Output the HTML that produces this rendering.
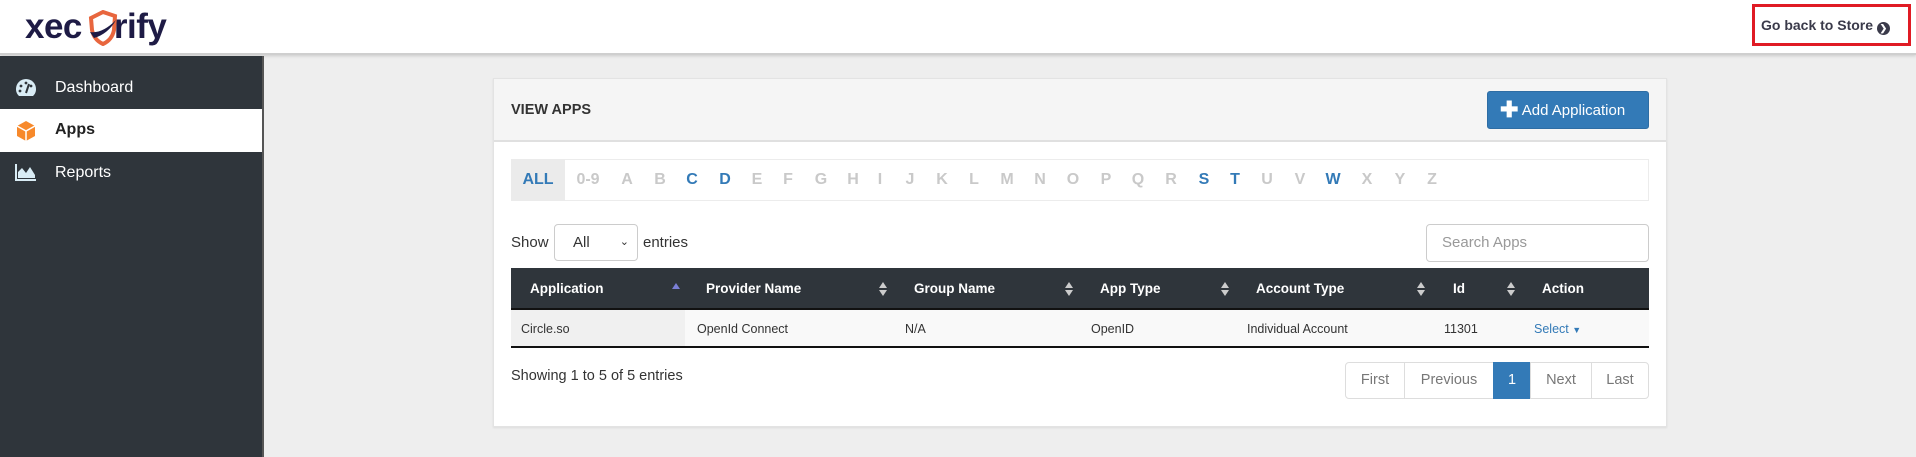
<!DOCTYPE html>
<html><head><meta charset="utf-8"><style>
*{box-sizing:border-box;margin:0;padding:0}
body{width:1916px;height:457px;overflow:hidden;background:#eeeeee;font-family:"Liberation Sans",Arial,sans-serif;position:relative;color:#333}
.a{position:absolute}
#hdr{left:0;top:0;width:1916px;height:55px;background:#fff;border-bottom:2px solid #cfcfcf;box-shadow:0 1px 3px rgba(0,0,0,.15)}
#side{left:0;top:56px;width:264px;height:401px;background:#2f353b;border-right:2px solid #555}
.nav{position:absolute;left:0;width:262px;height:42px;color:#fff;font-size:16px;line-height:42px;padding-left:55px}
.nav svg{position:absolute;left:15px;top:11px}
#panel{left:493px;top:78px;width:1174px;height:349px;background:#fff;border:1px solid #e3e3e3;box-shadow:0 1px 2px rgba(0,0,0,.08)}
.th{position:absolute;top:0;color:#fff;font-weight:bold;font-size:13.5px;line-height:42px}
.td{position:absolute;top:0;font-size:12.5px;line-height:38px;color:#333}
.lt{position:absolute;top:159px;width:30px;text-align:center;font-weight:bold;font-size:16px;line-height:42px;color:#c9c9c9}
.b{color:#337ab7}
.sort{position:absolute;top:13px;width:8px;height:16px}
.pg{position:absolute;top:362px;height:37px;border:1px solid #ddd;font-size:14.5px;line-height:35px;text-align:center;color:#777;background:#fff}
</style></head><body>
<div id="hdr" class="a">
  <div class="a" style="left:25px;top:5px;font-size:35px;font-weight:bold;color:#1e1b45;letter-spacing:-0.5px;line-height:44px">xec<span style="display:inline-block;width:32px"></span>rify</div>
  <svg class="a" style="left:88px;top:10px" width="30" height="36" viewBox="0 0 30 36"><path d="M15 2 L27 6 L26 20 Q24 30 15 34 Q6 30 4 20 L3 8 Z" fill="none" stroke="#e8663e" stroke-width="4"/><path d="M2 22 Q14 24 28 10 Q20 24 6 28 Z" fill="#1e1b45"/></svg>
  <div class="a" style="left:1752px;top:4px;width:159px;height:42px;border:3px solid #e01b24;font-size:14px;font-weight:bold;color:#3a3a4a;line-height:36px;padding-left:6px;white-space:nowrap">Go back to Store <span style="display:inline-block;width:13px;height:13px;border-radius:50%;background:#3a3a4a;color:#fff;font-size:9px;line-height:13px;text-align:center;vertical-align:-1px">&#10095;</span></div>
</div>
<div id="side" class="a">
  <div class="nav" style="top:11px;height:42px">
    <svg width="22" height="20" viewBox="0 0 22 20"><path d="M11 1a10 10 0 0 0-10 10c0 3 1 5 3 7h14c2-2 3-4 3-7A10 10 0 0 0 11 1z" fill="#d9ecf5"/><circle cx="6" cy="8" r="1.4" fill="#2f353b"/><circle cx="11" cy="5" r="1.4" fill="#2f353b"/><circle cx="16" cy="8" r="1.4" fill="#2f353b"/><circle cx="5" cy="13" r="1.4" fill="#2f353b"/><path d="M11 15 L14 6" stroke="#2f353b" stroke-width="2"/></svg>Dashboard</div>
  <div class="nav" style="top:53px;height:43px;background:#fff;color:#222;font-weight:bold">
    <svg width="22" height="22" viewBox="0 0 22 22"><path d="M11 1 L20 6 L20 16 L11 21 L2 16 L2 6 Z" fill="#f7892b"/><path d="M2 6 L11 11 L20 6 M11 11 L11 21" stroke="#fff" stroke-width="1.5" fill="none"/></svg>Apps</div>
  <div class="nav" style="top:96px;height:42px">
    <svg width="22" height="18" viewBox="0 0 22 18"><path d="M1 1 V17 H21" stroke="#d9ecf5" stroke-width="2" fill="none"/><path d="M3 15 L3 9 L7 5 L11 10 L15 4 L20 12 L20 15 Z" fill="#d9ecf5"/></svg>Reports</div>
</div>
<div id="panel" class="a">
  <div class="a" style="left:0;top:0;width:1172px;height:63px;background:#f5f5f5;border-bottom:2px solid #e0e0e0"></div>
  <div class="a" style="left:17px;top:0;line-height:63px;font-size:14.5px;font-weight:bold;color:#333">VIEW APPS</div>
  <div class="a" style="left:993px;top:12px;width:162px;height:38px;background:#337ab7;border:1px solid #2e6da4;border-radius:3px;color:#fff;font-size:15px;line-height:36px;padding-left:12px;white-space:nowrap"><span style="font-weight:bold;font-size:22px;vertical-align:-2px">&#10010;</span> Add Application</div>
</div>
<div class="a" style="left:511px;top:159px;width:1138px;height:42px;border:1px solid #ececec;background:#fff"></div>
<div class="a" style="left:511px;top:159px;width:54px;height:42px;background:#ebebeb"></div>
<div class="lt b" style="left:522px;width:32px">ALL</div>
<div class="lt" style="left:573px">0-9</div>
<div class="lt" style="left:612px">A</div><div class="lt" style="left:645px">B</div><div class="lt b" style="left:677px">C</div><div class="lt b" style="left:710px">D</div><div class="lt" style="left:742px">E</div><div class="lt" style="left:773px">F</div><div class="lt" style="left:806px">G</div><div class="lt" style="left:838px">H</div><div class="lt" style="left:865px">I</div><div class="lt" style="left:895px">J</div><div class="lt" style="left:927px">K</div><div class="lt" style="left:959px">L</div><div class="lt" style="left:992px">M</div><div class="lt" style="left:1025px">N</div><div class="lt" style="left:1058px">O</div><div class="lt" style="left:1091px">P</div><div class="lt" style="left:1123px">Q</div><div class="lt" style="left:1156px">R</div><div class="lt b" style="left:1189px">S</div><div class="lt b" style="left:1220px">T</div><div class="lt" style="left:1252px">U</div><div class="lt" style="left:1285px">V</div><div class="lt b" style="left:1318px">W</div><div class="lt" style="left:1352px">X</div><div class="lt" style="left:1385px">Y</div><div class="lt" style="left:1417px">Z</div>

<div class="a" style="left:511px;top:224px;line-height:37px;font-size:15px;color:#333">Show</div>
<div class="a" style="left:554px;top:224px;width:84px;height:37px;border:1px solid #ccc;border-radius:4px;background:#fff;font-size:15px;line-height:35px;padding-left:18px">All<span style="position:absolute;right:8px;top:0;font-size:11px">&#8964;</span></div>
<div class="a" style="left:643px;top:224px;line-height:37px;font-size:15px;color:#333">entries</div>
<div class="a" style="left:1426px;top:224px;width:223px;height:38px;border:1px solid #ccc;border-radius:4px;background:#fff;font-size:15px;line-height:36px;padding-left:15px;color:#999">Search Apps</div>

<div class="a" style="left:511px;top:268px;width:1138px;height:42px;background:#2f353b;border-bottom:2px solid #111">
  <div class="th" style="left:19px">Application</div>
  <div class="th" style="left:195px">Provider Name</div>
  <div class="th" style="left:403px">Group Name</div>
  <div class="th" style="left:589px">App Type</div>
  <div class="th" style="left:745px">Account Type</div>
  <div class="th" style="left:942px">Id</div>
  <div class="th" style="left:1031px">Action</div>
  <svg class="sort" style="left:161px" viewBox="0 0 8 16"><path d="M0 8 L4 2 L8 8 Z" fill="#7b7fd6"/></svg>
  <svg class="sort" style="left:368px" viewBox="0 0 8 16"><path d="M0 7 L4 1 L8 7 Z M0 9 L4 15 L8 9 Z" fill="#ccc"/></svg>
  <svg class="sort" style="left:554px" viewBox="0 0 8 16"><path d="M0 7 L4 1 L8 7 Z M0 9 L4 15 L8 9 Z" fill="#ccc"/></svg>
  <svg class="sort" style="left:710px" viewBox="0 0 8 16"><path d="M0 7 L4 1 L8 7 Z M0 9 L4 15 L8 9 Z" fill="#ccc"/></svg>
  <svg class="sort" style="left:906px" viewBox="0 0 8 16"><path d="M0 7 L4 1 L8 7 Z M0 9 L4 15 L8 9 Z" fill="#ccc"/></svg>
  <svg class="sort" style="left:996px" viewBox="0 0 8 16"><path d="M0 7 L4 1 L8 7 Z M0 9 L4 15 L8 9 Z" fill="#ccc"/></svg>
</div>
<div class="a" style="left:511px;top:310px;width:1138px;height:38px;background:#f9f9f9;border-bottom:2px solid #111">
  <div class="a" style="left:0;top:0;width:174px;height:36px;background:#f0f0f0"></div>
  <div class="td" style="left:10px">Circle.so</div>
  <div class="td" style="left:186px">OpenId Connect</div>
  <div class="td" style="left:394px">N/A</div>
  <div class="td" style="left:580px">OpenID</div>
  <div class="td" style="left:736px">Individual Account</div>
  <div class="td" style="left:933px">11301</div>
  <div class="td" style="left:1023px;color:#337ab7">Select <span style="font-size:9px">&#9660;</span></div>
</div>
<div class="a" style="left:511px;top:364px;font-size:14.5px;line-height:24px;color:#333">Showing 1 to 5 of 5 entries</div>
<div class="pg" style="left:1345px;width:60px;border-radius:4px 0 0 4px">First</div>
<div class="pg" style="left:1404px;width:90px">Previous</div>
<div class="pg" style="left:1493px;width:38px;background:#337ab7;border-color:#337ab7;color:#fff">1</div>
<div class="pg" style="left:1530px;width:62px">Next</div>
<div class="pg" style="left:1591px;width:58px;border-radius:0 4px 4px 0">Last</div>
</body></html>
